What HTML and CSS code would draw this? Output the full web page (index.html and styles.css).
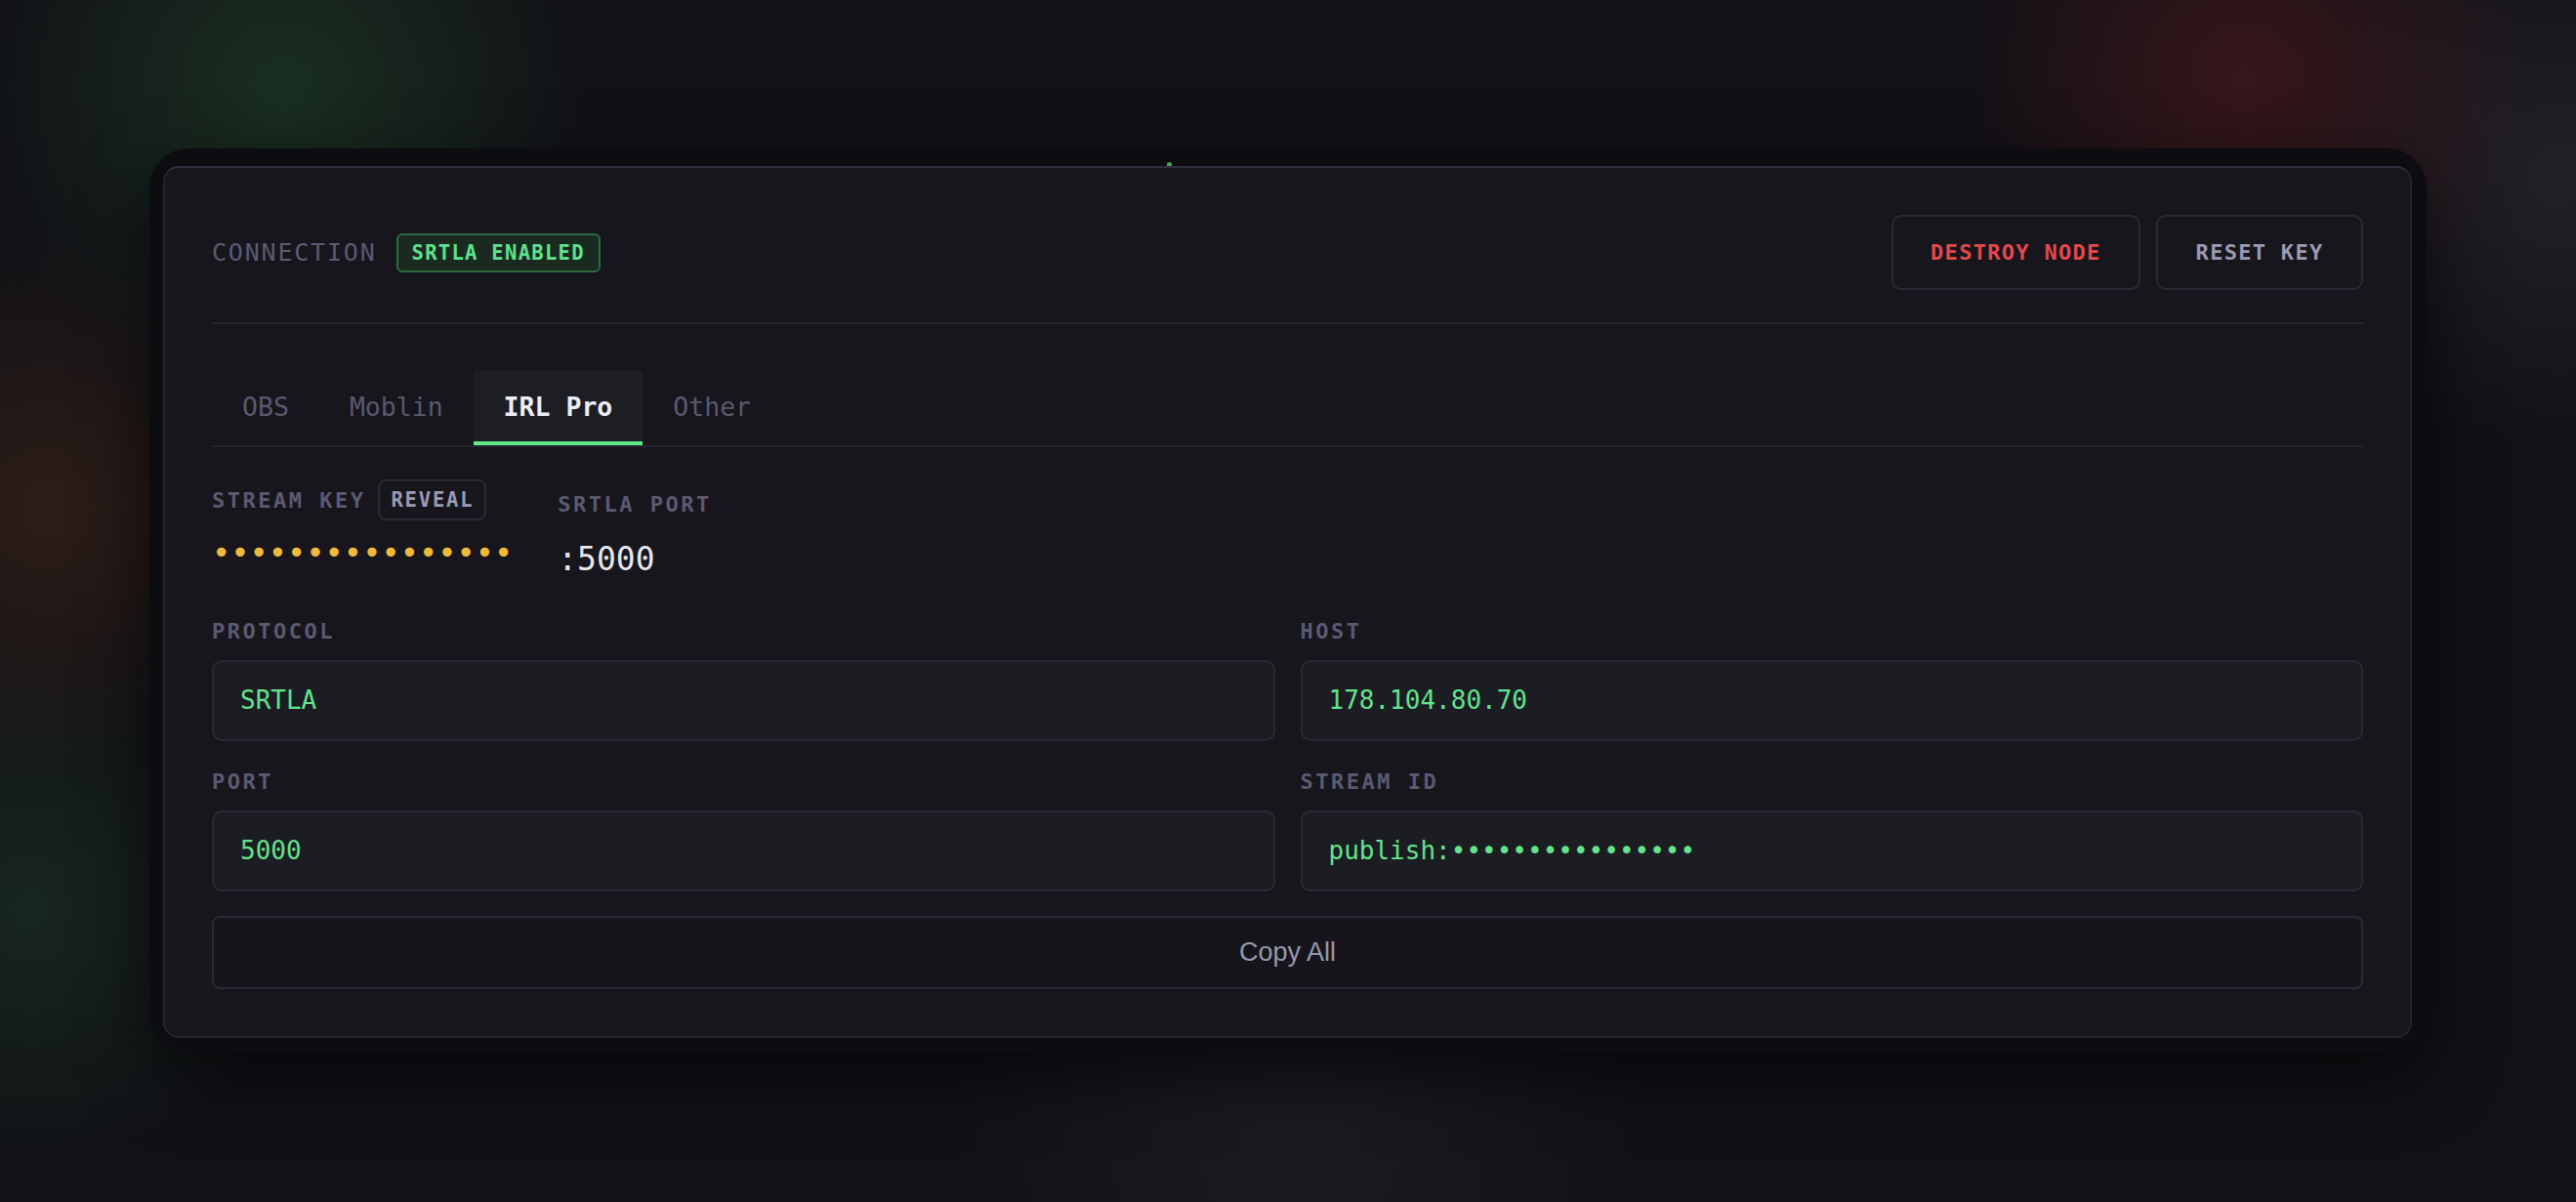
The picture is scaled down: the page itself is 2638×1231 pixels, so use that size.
FILE: index.html
```html
<!DOCTYPE html>
<html lang="en">
<head>
  <meta charset="utf-8">
  <title>Connection</title>
  <meta name="viewport" content="width=device-width, initial-scale=1">
  <link rel="stylesheet" href="styles.css">
</head>
<body>
  <div class="stage">
    <div class="device">
      <span class="led"></span>
      <section class="card">
        <header class="card-head">
          <div class="title">
            <span class="eyebrow">CONNECTION</span>
            <span class="badge">SRTLA ENABLED</span>
          </div>
          <div class="actions">
            <button class="btn btn-danger">DESTROY NODE</button>
            <button class="btn">RESET KEY</button>
          </div>
        </header>

        <nav class="tabs">
          <button class="tab">OBS</button>
          <button class="tab">Moblin</button>
          <button class="tab active">IRL Pro</button>
          <button class="tab">Other</button>
        </nav>

        <div class="meta">
          <div class="meta-col">
            <div class="label-row">
              <span class="label">STREAM KEY</span>
              <button class="reveal">REVEAL</button>
            </div>
            <div class="secret">••••••••••••••••</div>
          </div>
          <div class="meta-col port">
            <span class="label">SRTLA PORT</span>
            <div class="port-value">:5000</div>
          </div>
        </div>

        <div class="fields">
          <div class="field">
            <span class="label">PROTOCOL</span>
            <div class="value">SRTLA</div>
          </div>
          <div class="field">
            <span class="label">HOST</span>
            <div class="value">178.104.80.70</div>
          </div>
          <div class="field">
            <span class="label">PORT</span>
            <div class="value">5000</div>
          </div>
          <div class="field">
            <span class="label">STREAM ID</span>
            <div class="value">publish:••••••••••••••••</div>
          </div>
        </div>

        <button class="copy-all">Copy All</button>
      </section>
    </div>
  </div>
</body>
</html>
```

FILE: styles.css
```css
/* Reset */
*, *::before, *::after { box-sizing: border-box; }
html, body { margin: 0; padding: 0; height: 100%; width: 100%; overflow: hidden; }
body {
  font-family: "DejaVu Sans Mono", "Liberation Mono", monospace;
  color: #e6e6ee;
  background-color: #111116;
  background-image:
    radial-gradient(circle at 290px 90px, rgba(38, 88, 48, 0.42), rgba(38, 88, 48, 0) 320px),
    radial-gradient(circle at 2300px 80px, rgba(112, 30, 32, 0.40), rgba(112, 30, 32, 0) 300px),
    radial-gradient(circle at 50px 520px, rgba(110, 58, 28, 0.30), rgba(110, 58, 28, 0) 280px),
    radial-gradient(circle at 30px 930px, rgba(36, 88, 48, 0.30), rgba(36, 88, 48, 0) 280px),
    radial-gradient(circle at 2620px 180px, rgba(80, 80, 92, 0.25), rgba(80, 80, 92, 0) 280px),
    radial-gradient(circle at 1330px 1180px, rgba(70, 72, 82, 0.18), rgba(70, 72, 82, 0) 360px);
}
button { font: inherit; color: inherit; background: none; border: 0; padding: 0; cursor: pointer; }

.stage { padding: 152px 0 0 153px; }

/* outer bezel */
.device {
  position: relative;
  width: 2332px;
  padding: 18px 15px 14px 14px;
  background: #0d0d11;
  border-radius: 40px;
  box-shadow: 0 24px 70px rgba(0, 0, 0, 0.55);
}
.led {
  position: absolute; left: 1042px; top: 14px;
  width: 5px; height: 4px;
  border-radius: 3px 3px 0 0;
  background: #3fa55f;
}

.card {
  background: #16161c;
  border: 2px solid #24232e;
  border-top-color: #2f2e3e;
  border-radius: 16px;
  padding: 48px;
}

/* header */
.card-head {
  display: flex; align-items: center; justify-content: space-between;
  padding-bottom: 33px;
  border-bottom: 2px solid #25242f;
}
.title { display: flex; align-items: center; gap: 20px; }
.eyebrow { font-size: 25px; letter-spacing: 1.8px; color: #5b5a72; }
.badge {
  font-size: 20.5px; font-weight: bold; letter-spacing: 1.3px;
  line-height: 36px; padding: 0 14px;
  color: #5ee38c; background: #1a2a20;
  border: 2px solid #2c6a3f; border-radius: 6px;
}
.actions { display: flex; gap: 16px; }
.btn {
  height: 77px; padding: 0 38.5px;
  font-size: 22px; font-weight: bold; letter-spacing: 1.3px;
  color: #9a9ab2;
  border: 2px solid #292836; border-radius: 10px;
}
.btn-danger { color: #e5484d; }

/* tabs */
.tabs {
  display: flex;
  margin-top: 48px;
  border-bottom: 2px solid #25242f;
}
.tab {
  padding: 17px 31px 15px;
  font-size: 26.5px; line-height: 40px;
  color: #5a5970;
  border-bottom: 4px solid transparent;
}
.tab.active {
  color: #ececf2; font-weight: bold;
  background: #1d1d24;
  border-bottom-color: #5ee88a;
}

/* stream key + port */
.label {
  font-size: 22px; line-height: 33px; font-weight: bold;
  letter-spacing: 2.5px; color: #5b5a72;
}
.meta { display: flex; align-items: flex-start; gap: 46px; margin-top: 33px; }
.meta-col { display: flex; flex-direction: column; }
.label-row { display: flex; align-items: center; gap: 13px; height: 42px; }
.reveal {
  font-size: 20.5px; line-height: 24px; font-weight: bold; letter-spacing: 1.8px;
  padding: 7px 11px;
  color: #9a9ab4;
  border: 2px solid #292836; border-radius: 8px;
}
.secret {
  margin-top: 13px;
  font-size: 32px; line-height: 40px; letter-spacing: 0;
  color: #f0b93b;
}
.port { padding-top: 8.5px; }
.port-value { margin-top: 20px; font-size: 33px; line-height: 40px; color: #e6e6ee; }

/* fields */
.fields {
  display: grid; grid-template-columns: 1fr 1fr;
  column-gap: 26px; row-gap: 25px;
  margin-top: 37px;
}
.field { display: flex; flex-direction: column; gap: 13px; }
.value {
  padding: 20px 27px;
  font-size: 26px; line-height: 39px;
  color: #62e38e;
  background: #1c1c23;
  border: 2px solid #292836; border-radius: 10px;
}

.copy-all {
  display: block; width: 100%;
  margin-top: 25px; height: 75px;
  font-family: "Liberation Sans", Arial, sans-serif;
  font-size: 27px; color: #9898ae;
  background: #15151b;
  border: 2px solid #292836; border-radius: 8px;
}
```
